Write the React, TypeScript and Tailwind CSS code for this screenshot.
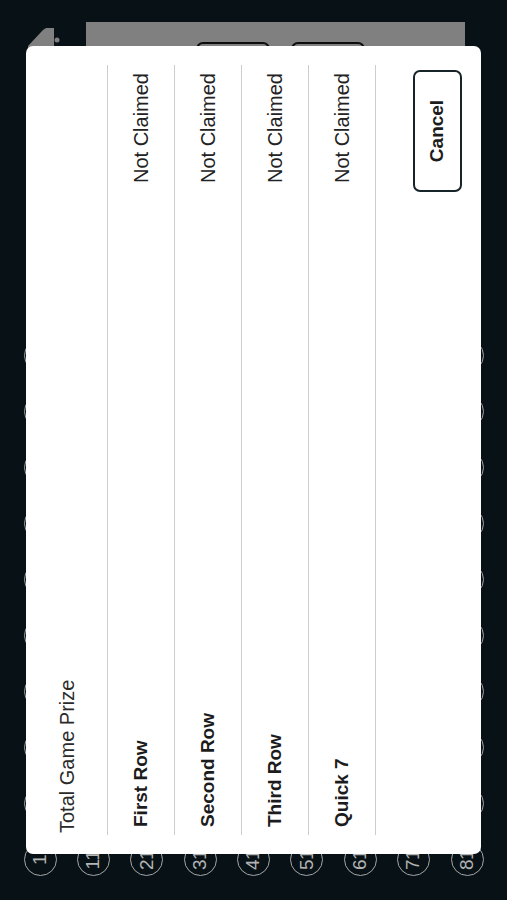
import React from "react";

const prizes = ["First Row", "Second Row", "Third Row", "Quick 7"];

function NumberBoard() {
    const numbers = Array.from({ length: 90 }, (_, i) => i + 1);
    return (
        <div className="self-start grid content-start grid-cols-[repeat(10,33px)] auto-rows-[33px] gap-x-[23px] gap-y-[20.4px] pl-[23.5px] pt-[23.5px]">
            {numbers.map((n) => (
                <div
                    key={n}
                    className="w-[33px] h-[33px] rounded-full border-[1.5px] border-[#a6a6a6] flex items-center justify-center text-[19px] tracking-[-0.5px] text-[#b4b4b4]"
                >
                    {n}
                </div>
            ))}
        </div>
    );
}

function SidePanel() {
    return (
        <div className="flex-1 flex flex-col items-end pr-[22px]">
            <div className="h-[86px] w-full relative">
                <svg className="absolute right-[-2px] top-[24px]" width="30" height="40" viewBox="0 0 30 40">
                    <polygon points="0,4 4,4 20,19 22,22 22,30 0,30" fill="#808080" />
                    <circle cx="10" cy="33" r="2.5" fill="#808080" />
                </svg>
            </div>
            <div className="w-[290px] h-[379px] bg-[#808080] flex flex-col items-end pr-[20px] pt-[110px] gap-[21px]">
                <div className="w-[140px] h-[74px] rounded-[7px] border-2 border-[#0c0c0c]" />
                <div className="w-[140px] h-[74px] rounded-[7px] border-2 border-[#0c0c0c]" />
            </div>
        </div>
    );
}

function PrizeModal() {
    return (
        <div className="absolute left-[46px] top-[26px] w-[808px] h-[455px] bg-white rounded-[7px] flex flex-col pt-[30px] px-[19px] pb-[19px] font-['Liberation_Sans',Arial,sans-serif] text-[#222]">
            <div className="h-[52px] border-b border-[#cdcdcd] pl-[2px]">
                <span className="text-[20px] leading-[23px] text-[#2a2a2a]">Total Game Prize</span>
            </div>
            {prizes.map((p) => (
                <div
                    key={p}
                    className="h-[67px] border-b border-[#cdcdcd] flex items-center justify-between px-[8px]"
                >
                    <span className="text-[19px] font-bold text-[#1c1c1c]">{p}</span>
                    <span className="text-[20px] text-[#222]">Not Claimed</span>
                </div>
            ))}
            <div className="flex-1 flex items-end justify-end pr-[5px]">
                <button className="w-[122px] h-[49px] rounded-[7px] border-2 border-[#16242a] text-[19px] font-bold text-[#1c1c1c]">
                    Cancel
                </button>
            </div>
        </div>
    );
}

export default function App() {
    return (
        <div className="w-[507px] h-[900px] relative overflow-hidden bg-[#081216] font-['Liberation_Sans',Arial,sans-serif]">
            {/* landscape screen, turned a quarter counter-clockwise */}
            <div className="absolute left-0 top-0 w-[900px] h-[507px] origin-top-left [transform:translateY(900px)_rotate(-90deg)] bg-[#081216] flex">
                <NumberBoard />
                <SidePanel />
                <PrizeModal />
            </div>
        </div>
    );
}
